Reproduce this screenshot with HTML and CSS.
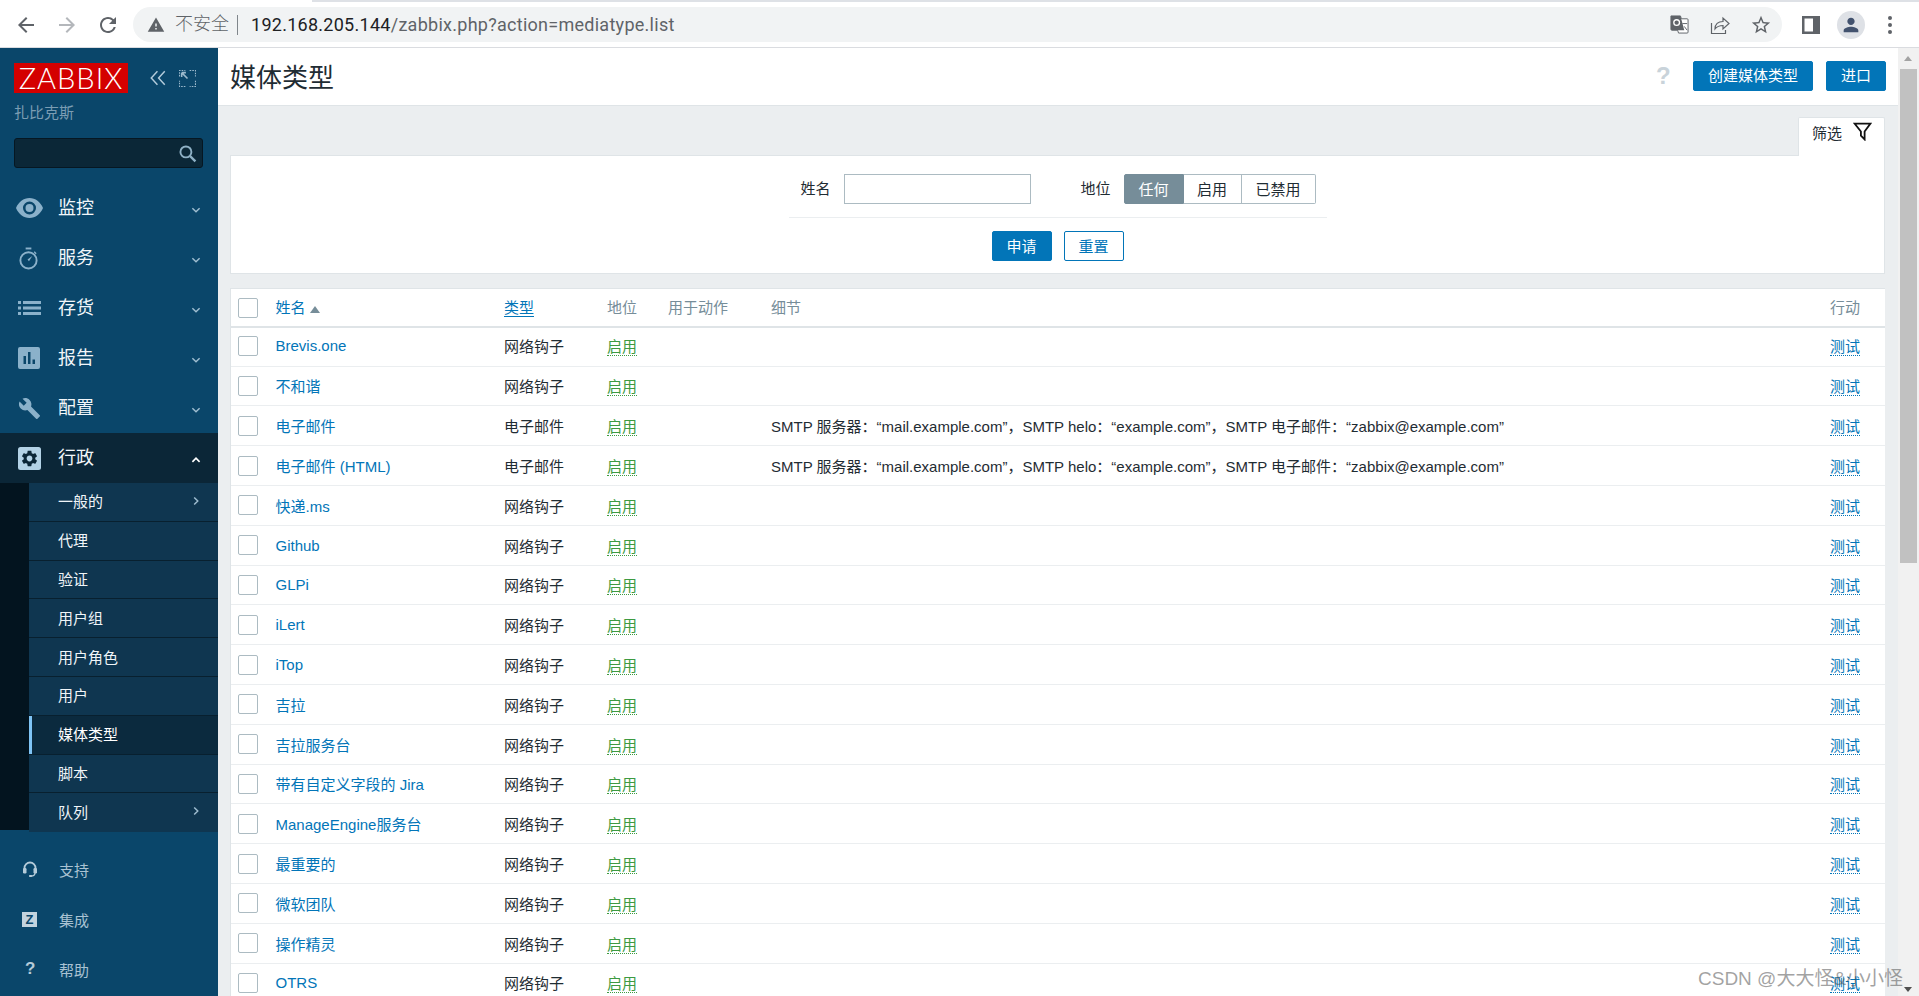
FILE: index.html
```html
<!DOCTYPE html>
<html lang="zh-CN">
<head>
<meta charset="utf-8">
<title>媒体类型</title>
<link rel="stylesheet" href="styles.css">
</head>
<body>
<svg class="defs" width="0" height="0">
  <symbol id="down" viewBox="0 0 10 10"><path d="M2 3.500 5 6.500 8 3.500" fill="none" stroke="currentColor" stroke-width="1.200"/></symbol>
  <symbol id="up" viewBox="0 0 10 10"><path d="M2 6.500 5 3.500 8 6.500" fill="none" stroke="currentColor" stroke-width="1.400"/></symbol>
  <symbol id="right" viewBox="0 0 10 10"><path d="M3.500 2 6.500 5 3.500 8" fill="none" stroke="currentColor" stroke-width="1.200"/></symbol>
</svg>

<header class="browser">
  <div class="tabstrip"></div>
  <div class="toolbar">
    <svg class="nav-btn" viewBox="0 0 24 24"><path d="M20 11H7.830l5.590-5.590L12 4l-8 8 8 8 1.410-1.410L7.830 13H20v-2z"/></svg>
    <svg class="nav-btn off" viewBox="0 0 24 24"><path d="M4 11h12.170l-5.590-5.590L12 4l8 8-8 8-1.410-1.410L16.170 13H4v-2z"/></svg>
    <svg class="nav-btn" viewBox="0 0 24 24"><path d="M17.650 6.350A7.958 7.958 0 0 0 12 4c-4.420 0-7.990 3.580-7.990 8s3.570 8 7.990 8c3.730 0 6.840-2.550 7.730-6h-2.080A5.990 5.990 0 0 1 12 18c-3.310 0-6-2.690-6-6s2.690-6 6-6c1.660 0 3.140.69 4.220 1.780L13 11h7V4l-2.350 2.350z"/></svg>
    <div class="omnibox">
      <svg class="warn" viewBox="0 0 24 24"><path d="M1 21h22L12 2 1 21zm12-3h-2v-2h2v2zm0-4h-2v-4h2v4z"/></svg>
      <span class="insecure">不安全</span>
      <span class="pipe"></span>
      <span class="url"><b>192.168.205.144</b>/zabbix.php?action=mediatype.list</span>
      <span class="omni-icons">
        <svg class="tr" viewBox="0 0 20 20"><path d="M1 1h10l1 3h6a1 1 0 0 1 1 1v13a1 1 0 0 1-1 1H9l-1-3H2a1 1 0 0 1-1-1z" fill="#fff" stroke="#5f6368"/><path d="M1 1h10l4 15H2a1 1 0 0 1-1-1z" fill="#5f6368"/><circle cx="7" cy="8" r="3" fill="none" stroke="#fff" stroke-width="1.400"/><path d="M13 9h5M15 12l3 4" stroke="#5f6368" fill="none"/></svg>
        <svg class="share" viewBox="0 0 20 20"><path d="M1.500 8v10.500h14V15M5 14c0-5 3-7.500 8-7.500V3l6 5.500-6 5.500v-3.500c-3.500 0-6 1-8 3.500z" fill="none" stroke="#5f6368" stroke-width="1.200"/></svg>
        <svg class="star" viewBox="0 0 24 24"><path d="M22 9.240l-7.190-.62L12 2 9.190 8.630 2 9.240l5.460 4.730L5.820 21 12 17.270 18.180 21l-1.630-7.030L22 9.240zM12 15.400l-3.760 2.270 1-4.280-3.320-2.880 4.380-.38L12 6.100l1.710 4.040 4.380.38-3.320 2.880 1 4.280L12 15.400z"/></svg>
      </span>
    </div>
    <svg class="panel" viewBox="0 0 18 18"><path d="M0 0h18v18H0zM2.500 2.500v13H11v-13z" fill-rule="evenodd"/></svg>
    <span class="avatar"><svg viewBox="0 0 24 24"><path d="M12 12c2.210 0 4-1.790 4-4s-1.790-4-4-4-4 1.790-4 4 1.790 4 4 4zm0 2c-2.670 0-8 1.340-8 4v2h16v-2c0-2.660-5.330-4-8-4z"/></svg></span>
    <span class="dots"><i></i><i></i><i></i></span>
  </div>
</header>

<div class="app">
  <aside class="sidebar">
    <div class="brand">
      <span class="logo">ZABBIX</span>
      <svg class="collapse" viewBox="0 0 16 16"><path d="M7.500 2 2 8l5.500 6M14 2 8.500 8l5.500 6" fill="none" stroke="currentColor" stroke-width="1.300"/></svg>
      <svg class="expand" viewBox="0 0 16 16"><path d="M.5 6V.5H6M10 .5h5.500V6M15.500 10v5.500H10M6 15.500H.5V10" fill="none" stroke="currentColor" stroke-dasharray="1.500 1"/><path d="M2.500 2.500 8 8M2.500 2.500h4M2.500 2.500v4" stroke="currentColor" stroke-width="1.500" fill="none"/></svg>
    </div>
    <div class="server">扎比克斯</div>
    <div class="search">
      <svg viewBox="0 0 18 18"><circle cx="7.500" cy="7.500" r="5.200" fill="none" stroke="currentColor" stroke-width="1.800"/><path d="M11.500 11.500 16.500 16.500" stroke="currentColor" stroke-width="2.200"/></svg>
    </div>
    <nav class="menu">
      <a class="item">
        <svg class="ico" viewBox="0 0 27 20"><path d="M13.500 0C7.500 0 2.500 4 0 10c2.500 6 7.500 10 13.500 10S24.500 16 27 10C24.500 4 19.500 0 13.500 0zm0 16.500a6.500 6.500 0 1 1 0-13 6.500 6.500 0 0 1 0 13zm0-10.500a4 4 0 1 0 0 8 4 4 0 0 0 0-8z" fill-rule="evenodd"/></svg>
        <span>监控</span><svg class="chev"><use href="#down"/></svg>
      </a>
      <a class="item">
        <svg class="ico" viewBox="0 0 22 24"><path d="M8 .5h6v2H8z"/><circle cx="11" cy="14" r="8.500" fill="none" stroke="currentColor" stroke-width="2"/><path d="M15 9.500 10 13l1.500 2zM17.500 4.500l2 2-1 1-2-2z"/></svg>
        <span>服务</span><svg class="chev"><use href="#down"/></svg>
      </a>
      <a class="item">
        <svg class="ico" viewBox="0 0 23 14"><path d="M0 0h3v3H0zM5 0h18v3H5zM0 5.500h3v3H0zM5 5.500h18v3H5zM0 11h3v3H0zM5 11h18v3H5z"/></svg>
        <span>存货</span><svg class="chev"><use href="#down"/></svg>
      </a>
      <a class="item">
        <svg class="ico" viewBox="0 0 22 22"><path d="M2 0h18a2 2 0 0 1 2 2v18a2 2 0 0 1-2 2H2a2 2 0 0 1-2-2V2a2 2 0 0 1 2-2zm3.500 9v8H8V9zm4.500-4v12h2.500V5zm4.500 7.500V17H17v-4.500z" fill-rule="evenodd"/></svg>
        <span>报告</span><svg class="chev"><use href="#down"/></svg>
      </a>
      <a class="item">
        <svg class="ico" viewBox="0 0 24 24"><path d="M22.700 19l-9.100-9.100c.9-2.300.4-5-1.500-6.900-2-2-5-2.400-7.400-1.300L9 6 6 9 1.600 4.700C.4 7.100.9 10.100 2.900 12.100c1.900 1.900 4.600 2.400 6.900 1.500l9.100 9.100c.4.4 1 .4 1.400 0l2.300-2.300c.5-.4.5-1.100.1-1.400z"/></svg>
        <span>配置</span><svg class="chev"><use href="#down"/></svg>
      </a>
      <a class="item open">
        <svg class="ico" viewBox="0 0 23 23"><rect width="23" height="23" rx="2.500"/><g transform="translate(1.900 1.900) scale(.8)"><path fill="#0b2637" d="M19.140 12.940c.04-.3.06-.61.06-.94 0-.32-.02-.64-.07-.94l2.030-1.580c.18-.14.23-.41.12-.61l-1.920-3.320c-.12-.22-.37-.29-.59-.22l-2.390.96c-.5-.38-1.030-.7-1.620-.94l-.36-2.540c-.04-.24-.24-.41-.48-.41h-3.840c-.24 0-.43.17-.47.41l-.36 2.540c-.59.24-1.130.57-1.620.94l-2.390-.96c-.22-.08-.47 0-.59.22L2.740 8.870c-.12.21-.08.47.12.61l2.030 1.580c-.05.3-.09.63-.09.94s.02.64.07.94l-2.030 1.580c-.18.14-.23.41-.12.61l1.920 3.320c.12.22.37.29.59.22l2.390-.96c.5.38 1.030.7 1.620.94l.36 2.540c.05.24.24.41.48.41h3.840c.24 0 .44-.17.47-.41l.36-2.540c.59-.24 1.130-.56 1.620-.94l2.390.96c.22.08.47 0 .59-.22l1.920-3.320c.12-.22.07-.47-.12-.61l-2.010-1.580zM12 15.600c-1.980 0-3.600-1.620-3.600-3.600s1.620-3.600 3.600-3.600 3.600 1.620 3.600 3.600-1.620 3.600-3.600 3.600z"/></g></svg>
        <span>行政</span><svg class="chev"><use href="#up"/></svg>
      </a>
      <ul class="submenu">
        <li><span>一般的</span><svg class="chev"><use href="#right"/></svg></li>
        <li><span>代理</span></li>
        <li><span>验证</span></li>
        <li><span>用户组</span></li>
        <li><span>用户角色</span></li>
        <li><span>用户</span></li>
        <li class="current"><span>媒体类型</span></li>
        <li><span>脚本</span></li>
        <li><span>队列</span><svg class="chev"><use href="#right"/></svg></li>
      </ul>
    </nav>
    <div class="foot">
      <a class="foot-item">
        <svg class="foot-ico" viewBox="0 0 14 16"><path d="M1.500 9V7a5.500 5.500 0 0 1 11 0v2" fill="none" stroke="currentColor" stroke-width="1.800"/><rect y="7" width="3.500" height="5.500" rx="1.200"/><rect x="10.500" y="7" width="3.500" height="5.500" rx="1.200"/><path d="M12 12c0 2-1.500 3-4 3" fill="none" stroke="currentColor" stroke-width="1.300"/><rect x="6" y="14" width="3" height="2" rx=".8"/></svg>
        <span>支持</span>
      </a>
      <a class="foot-item"><b class="z-badge">Z</b><span>集成</span></a>
      <a class="foot-item"><b class="help-mark">?</b><span>帮助</span></a>
    </div>
  </aside>

  <main class="main">
    <div class="page-head">
      <h1>媒体类型</h1>
      <div class="head-actions">
        <span class="q">?</span>
        <button class="btn wide">创建媒体类型</button>
        <button class="btn">进口</button>
      </div>
    </div>

    <div class="content">
      <div class="filter-tabs">
        <div class="filter-tab">
          <span>筛选</span>
          <svg viewBox="0 0 18 18"><path d="M1.500 1.500h15L11 9v7.500L7.500 13V9z" fill="none" stroke="#111" stroke-width="1.700"/></svg>
        </div>
      </div>
      <form class="filter">
        <div class="filter-row">
          <label class="f-label">姓名</label>
          <span class="input"></span>
          <label class="f-label second">地位</label>
          <div class="seg">
            <span class="on s1">任何</span><span class="s2">启用</span><span class="s3">已禁用</span>
          </div>
        </div>
        <div class="filter-btns">
          <button class="btn" type="button">申请</button>
          <button class="btn ghost" type="button">重置</button>
        </div>
      </form>

      <table class="list">
        <colgroup><col class="c1"><col class="c2"><col class="c3"><col class="c4"><col class="c5"><col class="c6"><col class="c7"></colgroup>
        <thead>
          <tr>
            <th><i class="cb"></i></th>
            <th class="t"><a class="lnk">姓名</a><em class="sort"></em></th>
            <th class="t"><a class="lnk under">类型</a></th>
            <th class="t">地位</th>
            <th class="t">用于动作</th>
            <th class="t">细节</th>
            <th class="t">行动</th>
          </tr>
        </thead>
        <tbody>
          <tr><td><i class="cb"></i></td><td><a class="lnk">Brevis.one</a></td><td>网络钩子</td><td><a class="ok">启用</a></td><td></td><td></td><td><a class="test">测试</a></td></tr>
          <tr><td><i class="cb"></i></td><td><a class="lnk">不和谐</a></td><td>网络钩子</td><td><a class="ok">启用</a></td><td></td><td></td><td><a class="test">测试</a></td></tr>
          <tr><td><i class="cb"></i></td><td><a class="lnk">电子邮件</a></td><td>电子邮件</td><td><a class="ok">启用</a></td><td></td><td>SMTP 服务器：“mail.example.com”，SMTP helo：“example.com”，SMTP 电子邮件：“zabbix@example.com”</td><td><a class="test">测试</a></td></tr>
          <tr><td><i class="cb"></i></td><td><a class="lnk">电子邮件 (HTML)</a></td><td>电子邮件</td><td><a class="ok">启用</a></td><td></td><td>SMTP 服务器：“mail.example.com”，SMTP helo：“example.com”，SMTP 电子邮件：“zabbix@example.com”</td><td><a class="test">测试</a></td></tr>
          <tr><td><i class="cb"></i></td><td><a class="lnk">快递.ms</a></td><td>网络钩子</td><td><a class="ok">启用</a></td><td></td><td></td><td><a class="test">测试</a></td></tr>
          <tr><td><i class="cb"></i></td><td><a class="lnk">Github</a></td><td>网络钩子</td><td><a class="ok">启用</a></td><td></td><td></td><td><a class="test">测试</a></td></tr>
          <tr><td><i class="cb"></i></td><td><a class="lnk">GLPi</a></td><td>网络钩子</td><td><a class="ok">启用</a></td><td></td><td></td><td><a class="test">测试</a></td></tr>
          <tr><td><i class="cb"></i></td><td><a class="lnk">iLert</a></td><td>网络钩子</td><td><a class="ok">启用</a></td><td></td><td></td><td><a class="test">测试</a></td></tr>
          <tr><td><i class="cb"></i></td><td><a class="lnk">iTop</a></td><td>网络钩子</td><td><a class="ok">启用</a></td><td></td><td></td><td><a class="test">测试</a></td></tr>
          <tr><td><i class="cb"></i></td><td><a class="lnk">吉拉</a></td><td>网络钩子</td><td><a class="ok">启用</a></td><td></td><td></td><td><a class="test">测试</a></td></tr>
          <tr><td><i class="cb"></i></td><td><a class="lnk">吉拉服务台</a></td><td>网络钩子</td><td><a class="ok">启用</a></td><td></td><td></td><td><a class="test">测试</a></td></tr>
          <tr><td><i class="cb"></i></td><td><a class="lnk">带有自定义字段的 Jira</a></td><td>网络钩子</td><td><a class="ok">启用</a></td><td></td><td></td><td><a class="test">测试</a></td></tr>
          <tr><td><i class="cb"></i></td><td><a class="lnk">ManageEngine服务台</a></td><td>网络钩子</td><td><a class="ok">启用</a></td><td></td><td></td><td><a class="test">测试</a></td></tr>
          <tr><td><i class="cb"></i></td><td><a class="lnk">最重要的</a></td><td>网络钩子</td><td><a class="ok">启用</a></td><td></td><td></td><td><a class="test">测试</a></td></tr>
          <tr><td><i class="cb"></i></td><td><a class="lnk">微软团队</a></td><td>网络钩子</td><td><a class="ok">启用</a></td><td></td><td></td><td><a class="test">测试</a></td></tr>
          <tr><td><i class="cb"></i></td><td><a class="lnk">操作精灵</a></td><td>网络钩子</td><td><a class="ok">启用</a></td><td></td><td></td><td><a class="test">测试</a></td></tr>
          <tr><td><i class="cb"></i></td><td><a class="lnk">OTRS</a></td><td>网络钩子</td><td><a class="ok">启用</a></td><td></td><td></td><td><a class="test">测试</a></td></tr>
        </tbody>
      </table>
    </div>
  </main>

  <div class="scrollbar">
    <i class="arrow-up"></i>
    <i class="thumb"></i>
    <i class="arrow-down"></i>
  </div>
</div>
<div class="watermark">CSDN @大大怪&amp;小小怪</div>
</body>
</html>
```

FILE: styles.css
```css
* { box-sizing: border-box; }
html, body { margin: 0; height: 100%; overflow: hidden; }
body {
  width: 1919px;
  height: 996px;
  font-family: "Liberation Sans", "Noto Sans CJK SC", sans-serif;
  font-size: 15px;
  color: #1f2c33;
  background: #ebeef0;
}
.defs { position: absolute; }
a { color: inherit; text-decoration: none; }

/* browser chrome */
.browser { height: 48px; background: #fff; border-bottom: 1px solid #dadce0; }
.tabstrip { height: 2px; margin-left: 312px; background: #dee1e6; }
.toolbar { height: 45px; display: flex; align-items: center; padding-left: 14px; }
.nav-btn { width: 24px; height: 24px; margin-right: 17px; fill: #5f6368; flex: none; }
.nav-btn.off { fill: #b4b7bb; }
.omnibox {
  flex: none;
  width: 1649px;
  margin-left: -4px;
  height: 35px;
  display: flex;
  align-items: center;
  padding-left: 14px;
  border-radius: 18px;
  background: #f1f3f4;
  font-family: "Roboto", "Noto Sans CJK SC", sans-serif;
  font-size: 18px;
  color: #5f6368;
}
.warn { width: 18px; height: 18px; fill: #5f6368; margin-right: 10px; }
.insecure { width: 54px; font-size: 18px; font-weight: 300; line-height: 22px; margin-top: -1px; }
.pipe { width: 1px; height: 20px; background: #80868b; margin: 0 13px 0 8px; }
.url { letter-spacing: .27px; white-space: nowrap; }
.url b { font-weight: 400; color: #202124; }
.omni-icons { margin-left: auto; display: flex; align-items: center; padding-right: 10px; }
.tr { width: 19px; height: 19px; margin-right: 21px; }
.share { width: 20px; height: 20px; margin-right: 20px; }
.star { width: 22px; height: 22px; fill: #5f6368; }
.panel { width: 18px; height: 18px; fill: #5f6368; margin-left: 20px; flex: none; }
.avatar {
  flex: none; width: 28px; height: 28px; margin-left: 17px;
  border-radius: 50%; background: #dee1e6; display: flex; align-items: center; justify-content: center;
}
.avatar svg { width: 22px; height: 22px; fill: #42526e; }
.dots { flex: none; display: flex; flex-direction: column; gap: 3px; margin-left: 23px; }
.dots i { width: 4px; height: 4px; border-radius: 50%; background: #5f6368; }

/* layout */
.app { display: flex; height: 948px; }

/* sidebar */
.sidebar { flex: none; width: 218px; background: #0a466a; display: flex; flex-direction: column; color: #fff; }
.brand { display: flex; align-items: flex-start; padding: 15px 0 0 14px; height: 55px; }
.logo {
  width: 114px; height: 30px; background: #d40000; color: #fff;
  font-family: "Lato", "Liberation Sans", sans-serif; font-weight: 300;
  font-size: 29px; line-height: 30px; text-align: center; letter-spacing: 1px;
}
.collapse { width: 18px; height: 18px; margin: 6px 0 0 21px; color: #b3cbdb; }
.expand { width: 17px; height: 17px; margin: 7px 0 0 12px; color: #9dbacd; }
.server { padding-left: 14px; height: 35px; line-height: 20px; color: #7b9db3; }
.search {
  width: 189px; height: 30px; margin-left: 14px; background: #0b2737;
  border: 1px solid #061722; border-radius: 3px; display: flex; align-items: center; justify-content: flex-end;
  padding-right: 5px; color: #8fb1c6;
}
.search svg { width: 19px; height: 19px; }
.menu { margin-top: 15px; }
.item { height: 50px; display: flex; align-items: center; position: relative; font-size: 18px; }
.item span { position: absolute; left: 58px; top: 13px; line-height: 24px; color: #f2f6f9; }
.ico { position: absolute; left: 18px; fill: #8bb1ca; color: #8bb1ca; }
.item:nth-child(1) .ico { left: 16px; width: 27px; height: 20px; margin-top: -1px; }
.item:nth-child(2) .ico { left: 18px; width: 21px; height: 23px; }
.item:nth-child(3) .ico { width: 23px; height: 14px; }
.item:nth-child(4) .ico { width: 22px; height: 22px; }
.item:nth-child(5) .ico { width: 23px; height: 23px; }
.item.open { background: #0b2637; }
.item.open .ico { fill: #b3d2e6; width: 23px; height: 23px; }
.chev { position: absolute; right: 16px; width: 12px; height: 12px; color: #9fbdd0; }
.item .chev { top: 21px; }
.item.open .chev { color: #fff; }
.submenu {
  list-style: none; margin: 0; padding: 0 0 0 29px;
  height: 347px; background: #03141f;
}
.submenu li {
  height: 38.800px; display: flex; align-items: center; position: relative;
  padding: 0 0 2px 29px; background: #0f3650; border-bottom: 1.500px solid #08202f; color: #f0f5f8;
}
.submenu li:last-child { border-bottom: 0; }
.submenu li .chev { top: 12px; }
.submenu .current { background: #0b2a3e; box-shadow: inset 3px 0 0 #7fc4f5; color: #fff; }
.foot { margin-top: 14px; }
.foot-item { height: 50px; display: flex; align-items: center; position: relative; color: #a9c2d2; }
.foot-item span { position: absolute; left: 59px; }
.foot-ico { position: absolute; left: 23px; width: 14px; height: 16px; fill: #b5cbd9; color: #b5cbd9; }
.z-badge {
  position: absolute; left: 22px; width: 15px; height: 15px; background: #c3d3de; color: #0a466a;
  font-size: 13px; line-height: 15px; text-align: center; font-weight: 700;
}
.help-mark { position: absolute; left: 25px; width: 10px; font-size: 17px; color: #b5cbd9; text-align: center; }

/* main */
.main { flex: none; width: 1680px; overflow: hidden; }
.page-head {
  height: 58px; background: #fff; border-bottom: 1px solid #dfe4e7;
  display: flex; align-items: center; justify-content: space-between; padding: 0 12px;
}
h1 { margin: 2px 0 0; font-size: 26px; font-weight: 400; color: #1f2c33; line-height: 34px; }
.head-actions { display: flex; align-items: center; margin-top: -1px; }
.q { color: #c9d3da; font-size: 24px; font-weight: 700; margin-right: 23px; width: 14px; }
.btn {
  height: 30px; width: 60px; border: 1px solid #0275b8; border-radius: 2px; background: #0275b8;
  color: #fff; font: inherit; font-size: 15px; padding: 0 0 3px; margin: 0;
}
.head-actions .btn { margin-left: 13px; }
.head-actions .wide { width: 120px; margin-left: 0; }
.ghost { background: #fff; color: #0275b8; }
.content { padding: 11px 13px 0 12px; }
.filter-tabs { display: flex; justify-content: flex-end; height: 38px; }
.filter-tab {
  width: 87px; height: 39px; background: #fff; border: 1px solid #dfe4e7; border-bottom: 0;
  border-radius: 2px 2px 0 0; display: flex; align-items: flex-start; padding: 4px 0 0 13px; position: relative;
}
.filter-tab svg { width: 19px; height: 19px; margin: 0 0 0 11px; }
.filter { height: 119px; background: #fff; border: 1px solid #dfe4e7; }
.filter-row {
  width: 538px; margin: 18px auto 0; height: 44px; border-bottom: 1px solid #ebeef0;
  display: flex; padding-left: 12px;
}
.f-label { line-height: 29px; width: 43px; }
.input { width: 187px; height: 30px; border: 1px solid #acbbc2; }
.f-label.second { margin-left: 50px; }
.seg { display: flex; height: 30px; line-height: 29px; }
.seg span { border: 1px solid #acbbc2; text-align: center; }
.seg .on { background: #768d99; border-color: #768d99; color: #fff; border-radius: 2px 0 0 2px; }
.seg .s1 { width: 60px; }
.seg .s2 { width: 58px; border-left: 0; }
.seg .s3 { width: 74px; border-left: 0; border-radius: 0 2px 2px 0; }
.filter-btns { display: flex; justify-content: center; gap: 12px; margin-top: 13px; }
.filter-btns .btn { padding-bottom: 1px; }

/* table */
.list {
  width: 1655px; margin-top: 14px; table-layout: fixed; border-collapse: separate; border-spacing: 0;
  background: #fff; border-top: 1px solid #dfe4e7; border-left: 1px solid #dfe4e7;
}
.c1 { width: 44.500px; } .c2 { width: 228.500px; } .c3 { width: 103px; } .c4 { width: 61px; }
.c5 { width: 103px; } .c6 { width: 1059px; } .c7 { width: 55px; }
th {
  height: 39px; padding: 0; text-align: left; font-weight: 400; color: #768d99;
  border-bottom: 2px solid #dfe4e7;
}
th.t { padding-bottom: 2px; }
td { height: 39.800px; padding: 0; border-bottom: 1px solid #ebeef0; white-space: nowrap; }
tbody tr:first-child td { height: 38.600px; padding-bottom: 2px; }
.cb {
  display: block; width: 20px; height: 20px; margin-left: 7px; border: 1px solid #acbbc2; border-radius: 2px; background: #fff;
}
.lnk { color: #0275b8; }
.under { border-bottom: 1px solid #0275b8; }
.sort {
  display: inline-block; width: 0; height: 0; margin-left: 4px; vertical-align: 0;
  border: 5px solid transparent; border-top: 0; border-bottom: 7px solid #768d99;
}
.ok { color: #3d9a41; border-bottom: 1px dotted #3d9a41; }
.test { color: #0275b8; border-bottom: 1px dotted #0275b8; }

/* page scrollbar */
.scrollbar { flex: none; width: 21px; background: #f1f1f1; position: relative; }
.thumb { position: absolute; left: 2px; top: 21px; width: 17px; height: 494px; background: #c1c1c1; }
.arrow-up, .arrow-down { position: absolute; left: 6px; width: 0; height: 0; border: 4.500px solid transparent; }
.arrow-up { top: 8px; border-top: 0; border-bottom: 5px solid #a3a3a3; }
.arrow-down { bottom: 4px; border-bottom: 0; border-top: 5px solid #505050; }

.watermark {
  position: absolute; left: 1698px; top: 967px; color: rgba(70, 70, 70, .5);
  font-size: 19px; line-height: 24px; white-space: nowrap;
}
```
